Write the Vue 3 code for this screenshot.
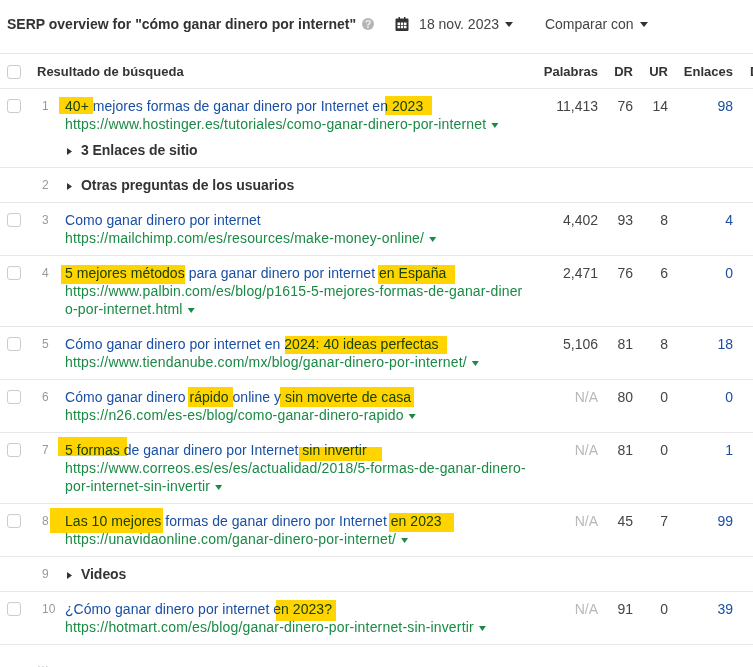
<template>
  <div class="page">
    <div class="toolbar">
      <h1 class="title">SERP overview for "cómo ganar dinero por internet"</h1>
      <span class="help">?</span>
      <svg class="cal" viewBox="0 0 14 14" width="14" height="14">
        <path d="M1.500 1.500h2V0h1.500v1.500h4V0h1.500v1.500h2a1 1 0 0 1 1 1V13a1 1 0 0 1-1 1h-11a1 1 0 0 1-1-1V2.500a1 1 0 0 1 1-1z" fill="#333" />
        <path d="M2.500 5.500h2.500v2.500H2.500zM5.800 5.500h2.400v2.500H5.800zM9 5.500h2.500v2.500H9zM2.500 8.800h2.500v2.500H2.500zM5.800 8.800h2.400v2.500H5.800zM9 8.800h2.500v2.500H9z" fill="#fff" />
      </svg>
      <button class="drop date">18 nov. 2023 <i class="caret"></i></button>
      <button class="drop compare">Comparar con <i class="caret"></i></button>
    </div>

    <div class="row head">
      <span class="box"></span>
      <span class="result-head">Resultado de búsqueda</span>
      <span class="n">Palabras</span>
      <span class="n">DR</span>
      <span class="n">UR</span>
      <span class="n">Enlaces</span>
      <span class="cut">D</span>
    </div>

    <div v-for="r in rows" :key="r.pos" class="row">
      <span v-for="h in r.marks || []" :key="h[0]" class="mark" :style="markStyle(h)"></span>
      <span v-if="r.url" class="box"></span>
      <span v-else></span>
      <span class="pos">{{ r.pos }}</span>
      <div class="main">
        <template v-if="r.url">
          <a class="link">{{ r.title }}</a>
          <a class="url">{{ r.url }} <i class="url-caret"></i></a>
          <div v-if="r.sub" class="section sub"><i class="tri"></i>{{ r.sub }}</div>
        </template>
        <div v-else class="section"><i class="tri"></i>{{ r.section }}</div>
      </div>
      <template v-if="r.url">
        <span class="n val" :class="{ na: r.words === 'N/A' }">{{ r.words }}</span>
        <span class="n val">{{ r.dr }}</span>
        <span class="n val">{{ r.ur }}</span>
        <span class="n val blue">{{ r.links }}</span>
      </template>
    </div>

    <div class="more">...</div>
  </div>
</template>

<script setup>
// marks: [left, top within the row, width, height], hand drawn highlights
const rows = [
  {
    pos: 1,
    title: "40+ mejores formas de ganar dinero por Internet en 2023",
    url: "https://www.hostinger.es/tutoriales/como-ganar-dinero-por-internet",
    sub: "3 Enlaces de sitio",
    words: "11,413", dr: 76, ur: 14, links: 98,
    marks: [[59, 8, 34, 17], [385, 7, 47, 19]],
  },
  { pos: 2, section: "Otras preguntas de los usuarios" },
  {
    pos: 3,
    title: "Como ganar dinero por internet",
    url: "https://mailchimp.com/es/resources/make-money-online/",
    words: "4,402", dr: 93, ur: 8, links: 4,
  },
  {
    pos: 4,
    title: "5 mejores métodos para ganar dinero por internet en España",
    url: "https://www.palbin.com/es/blog/p1615-5-mejores-formas-de-ganar-dinero-por-internet.html",
    words: "2,471", dr: 76, ur: 6, links: 0,
    marks: [[61, 9, 124, 19], [378, 9, 77, 19]],
  },
  {
    pos: 5,
    title: "Cómo ganar dinero por internet en 2024: 40 ideas perfectas",
    url: "https://www.tiendanube.com/mx/blog/ganar-dinero-por-internet/",
    words: "5,106", dr: 81, ur: 8, links: 18,
    marks: [[285, 9, 162, 18]],
  },
  {
    pos: 6,
    title: "Cómo ganar dinero rápido online y sin moverte de casa",
    url: "https://n26.com/es-es/blog/como-ganar-dinero-rapido",
    words: "N/A", dr: 80, ur: 0, links: 0,
    marks: [[188, 7, 45, 20], [280, 7, 134, 20]],
  },
  {
    pos: 7,
    title: "5 formas de ganar dinero por Internet sin invertir",
    url: "https://www.correos.es/es/es/actualidad/2018/5-formas-de-ganar-dinero-por-internet-sin-invertir",
    words: "N/A", dr: 81, ur: 0, links: 1,
    marks: [[58, 4, 69, 19], [299, 14, 83, 14]],
  },
  {
    pos: 8,
    title: "Las 10 mejores formas de ganar dinero por Internet en 2023",
    url: "https://unavidaonline.com/ganar-dinero-por-internet/",
    words: "N/A", dr: 45, ur: 7, links: 99,
    marks: [[50, 4, 113, 25], [389, 9, 65, 19]],
  },
  { pos: 9, section: "Videos" },
  {
    pos: 10,
    title: "¿Cómo ganar dinero por internet en 2023?",
    url: "https://hotmart.com/es/blog/ganar-dinero-por-internet-sin-invertir",
    words: "N/A", dr: 91, ur: 0, links: 39,
    marks: [[276, 8, 60, 21]],
  },
];

const markStyle = (h) => ({
  left: h[0] + "px",
  top: h[1] + "px",
  width: h[2] + "px",
  height: h[3] + "px",
});
</script>

<style>
html, body {
  background: #fff;
  overflow: hidden;
}
</style>

<style scoped>
.page {
  width: 753px;
  height: 667px;
  overflow: hidden;
  font-family: "Liberation Sans", Arial, sans-serif;
  font-size: 14px;
  line-height: 18px;
  color: #333;
}
.toolbar {
  display: flex;
  align-items: center;
  box-sizing: border-box;
  height: 53px;
  padding: 0 0 5px 7px;
}
.title {
  margin: 0;
  font-size: 14px;
  font-weight: bold;
  white-space: nowrap;
}
.help {
  width: 12px;
  height: 12px;
  margin-left: 6px;
  border-radius: 50%;
  background: #b5b5b5;
  color: #eee;
  font-size: 11px;
  font-weight: bold;
  line-height: 12px;
  text-align: center;
}
.cal {
  margin-left: 21px;
}
.drop {
  padding: 0;
  border: none;
  background: none;
  font: inherit;
  color: #444;
  white-space: nowrap;
}
.date {
  margin-left: 10px;
}
.compare {
  margin-left: 32px;
}
.caret {
  display: inline-block;
  width: 0;
  height: 0;
  margin-left: 2px;
  border-left: 4px solid transparent;
  border-right: 4px solid transparent;
  border-top: 5px solid #333;
  vertical-align: 2px;
}
.url-caret {
  display: inline-block;
  width: 7px;
  height: 5px;
  margin-left: 1px;
  background: #1a8a45;
  clip-path: polygon(0 0, 100% 0, 50% 100%);
  vertical-align: 1px;
}
.row {
  position: relative;
  display: grid;
  grid-template-columns: 14px 27px 1fr 68px 35px 35px 65px 20px;
  align-items: start;
  padding: 8px 0 8px 7px;
  border-bottom: 1px solid #e8e8e8;
}
.head {
  grid-template-columns: 14px 1fr 68px 35px 35px 65px 20px;
  padding: 9px 0 7px 7px;
  border-top: 1px solid #e8e8e8;
  font-weight: bold;
  font-size: 13px;
}
.result-head {
  margin-left: 16px;
}
.box {
  width: 14px;
  height: 14px;
  margin-top: 2px;
  box-sizing: border-box;
  border: 1px solid #ccc;
  border-radius: 3px;
  background: #fff;
}
.pos {
  padding-left: 21px;
  font-size: 12px;
  color: #999;
  white-space: nowrap;
}
.main {
  margin-left: 17px;
  width: 463px;
  min-width: 0;
}
.link {
  display: block;
  color: #1a4fa5;
  letter-spacing: 0.04px;
  white-space: nowrap;
}
.url {
  display: block;
  color: #1a8a45;
  letter-spacing: 0.17px;
  word-break: break-all;
}
.section {
  font-weight: bold;
  letter-spacing: -0.05px;
  white-space: nowrap;
}
.sub {
  margin-top: 8px;
}
.tri {
  display: inline-block;
  width: 5px;
  height: 7px;
  margin: 0 9px 0 2px;
  background: #333;
  clip-path: polygon(0 0, 100% 50%, 0 100%);
  vertical-align: 0;
}
.n {
  text-align: right;
}
.val {
  color: #444;
}
.na {
  color: #b8b8b8;
}
.blue {
  color: #1a4fa5;
}
.cut {
  margin-left: 17px;
}
.mark {
  position: absolute;
  background: #ffd400;
  mix-blend-mode: multiply;
}
.more {
  padding-left: 37px;
  color: #999;
  line-height: 36px;
}
</style>
